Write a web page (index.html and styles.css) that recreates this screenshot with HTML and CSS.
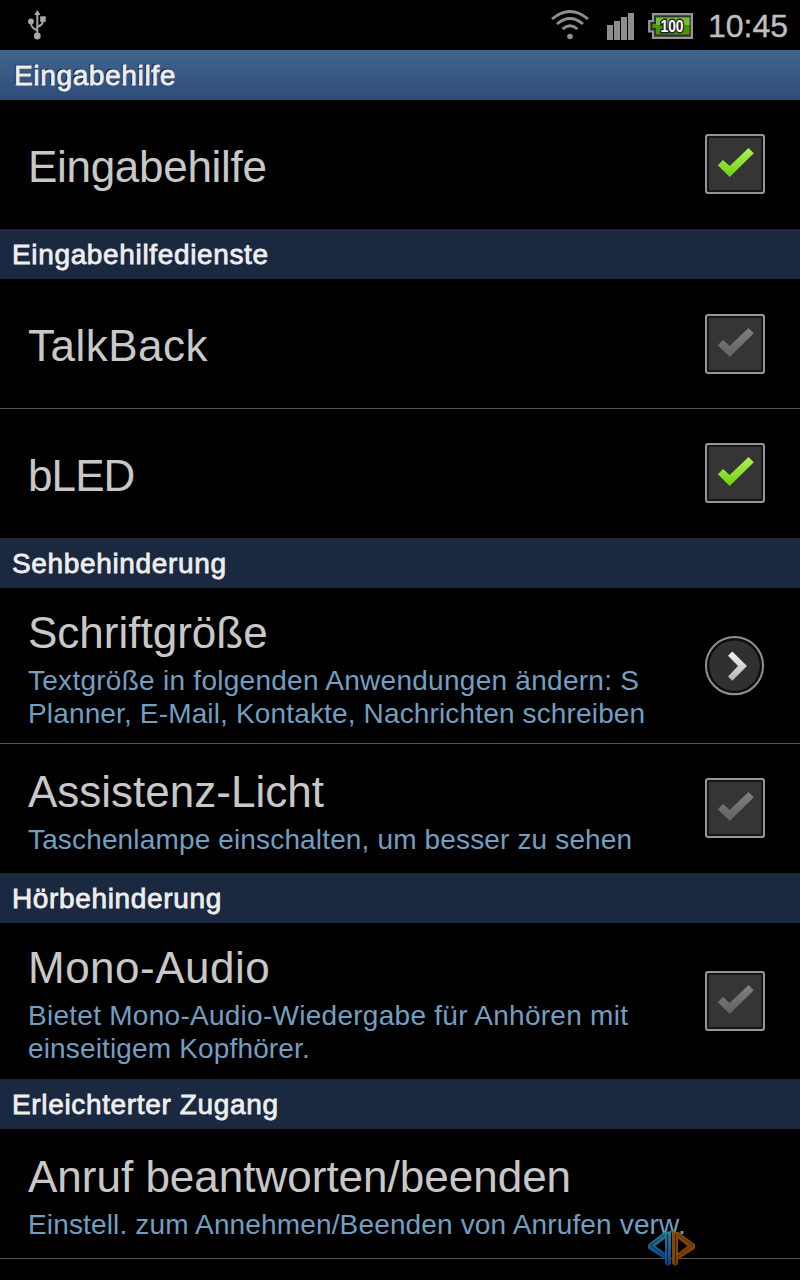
FILE: index.html
```
<!DOCTYPE html>
<html lang="de">
<head>
	<meta charset="UTF-8">
	<title>Eingabehilfe</title>
	<link rel="stylesheet" href="styles.css">
</head>
<body>

	<!-- shared shapes -->
	<svg class="defs" width="0" height="0">
		<defs>
			<linearGradient id="green" x1="0" y1="0" x2="0" y2="1">
				<stop offset="0" stop-color="#b0f05a"/>
				<stop offset="1" stop-color="#70d010"/>
			</linearGradient>
			<linearGradient id="grey" x1="0" y1="0" x2="0" y2="1">
				<stop offset="0" stop-color="#808080"/>
				<stop offset="1" stop-color="#626262"/>
			</linearGradient>
			<linearGradient id="silver" x1="0" y1="0" x2="0" y2="1">
				<stop offset="0" stop-color="#f4f4f4"/>
				<stop offset="1" stop-color="#b4b4b4"/>
			</linearGradient>
			<linearGradient id="blue" x1="0" y1="0" x2="0" y2="1">
				<stop offset="0" stop-color="#2f7d90"/>
				<stop offset="1" stop-color="#0d3f88"/>
			</linearGradient>
			<linearGradient id="orange" x1="0" y1="0" x2="0" y2="1">
				<stop offset="0" stop-color="#8a4a0c"/>
				<stop offset="1" stop-color="#7c4002"/>
			</linearGradient>
			<symbol id="check" viewBox="0 0 60 60">
				<path d="M12.800 31.200L18 25.900L24.700 32L43.500 14L48.800 19.200L24.700 43Z"/>
			</symbol>
		</defs>
	</svg>

	<div class="statusbar">
		<svg class="usb" width="20" height="30" viewBox="0 0 20 30">
			<path d="M10.300 4V25M10.300 20.500C6 18.500 4 17 4 12M10.300 17C14.500 15 16 14 16 10" fill="none" stroke="#a4a4a4" stroke-width="2"/>
			<path d="M10.300 0L13.500 5H7.200Z" fill="#a8a8a8"/>
			<circle cx="3.900" cy="11.500" r="2.900" fill="#a8a8a8"/>
			<rect x="13.200" y="6.300" width="5.500" height="5.500" fill="#a8a8a8"/>
			<circle cx="10.300" cy="26" r="3.400" fill="#a8a8a8"/>
		</svg>
		<div class="tray">
			<svg class="wifi" width="40" height="32" viewBox="0 0 40 32">
				<g fill="none" stroke="#8f8f8f" stroke-width="2.800">
					<path d="M2 11Q20 -4 38 11"/>
					<path d="M7 16Q20 5 33 16"/>
					<path d="M12.500 21Q20 14.500 27.500 21"/>
				</g>
				<circle cx="20" cy="28.500" r="2.800" fill="#8f8f8f"/>
			</svg>
			<svg class="signal" width="28" height="28" viewBox="0 0 28 28">
				<path d="M0 13h6v15H0zM7 9h6v19H7zM14 5h6v23h-6zM21 1h6v27h-6z" fill="#8e8e8e"/>
			</svg>
			<svg class="battery" width="46" height="26" viewBox="0 0 46 26">
				<path d="M5 1.200H43.900V24.800H5V18.500H1.200V8H5Z" fill="#303030" stroke="#969696" stroke-width="2.200"/>
				<path d="M8 4.500H41.500V21.500H8V15H4.500V11H8Z" fill="#479805"/>
				<path d="M8 4.500H41.500V12H8Z" fill="#73bd2e"/>
				<text x="24" y="18.500" text-anchor="middle" textLength="23" lengthAdjust="spacingAndGlyphs">100</text>
			</svg>
			<span class="clock">10:45</span>
		</div>
	</div>

	<div class="titlebar"><span>Eingabehilfe</span></div>

	<div class="list">
		<div class="row">
			<div class="label"><span class="name tight">Eingabehilfe</span></div>
			<div class="checkbox on"><svg><use href="#check"/></svg></div>
		</div>

		<div class="header"><span>Eingabehilfedienste</span></div>
		<div class="row line">
			<div class="label"><span class="name wide">TalkBack</span></div>
			<div class="checkbox"><svg><use href="#check"/></svg></div>
		</div>
		<div class="row">
			<div class="label"><span class="name caps">bLED</span></div>
			<div class="checkbox on"><svg><use href="#check"/></svg></div>
		</div>

		<div class="header"><span>Sehbehinderung</span></div>
		<div class="row tall line">
			<div class="label two">
				<span class="name">Schriftgröße</span>
				<span class="summary"><span class="loose">Textgröße in folgenden Anwendungen ändern: S</span><br>Planner, E-Mail, Kontakte, Nachrichten schreiben</span>
			</div>
			<svg class="more" width="62" height="62" viewBox="0 0 62 62">
				<circle cx="30.500" cy="30.700" r="28.500" fill="#303030" stroke="#8c8c8c" stroke-width="2.200"/>
				<circle cx="30.500" cy="30.700" r="26.300" fill="none" stroke="#0c0c0c" stroke-width="2.200"/>
				<path d="M24 20.700L28.300 16.500L43 31L28.300 45.800L24 41.500L34 31Z" fill="url(#silver)"/>
			</svg>
		</div>
		<div class="row">
			<div class="label two">
				<span class="name">Assistenz-Licht</span>
				<span class="summary">Taschenlampe einschalten, um besser zu sehen</span>
			</div>
			<div class="checkbox"><svg><use href="#check"/></svg></div>
		</div>

		<div class="header"><span>Hörbehinderung</span></div>
		<div class="row tall last">
			<div class="label two">
				<span class="name wide">Mono-Audio</span>
				<span class="summary"><span class="loose">Bietet Mono-Audio-Wiedergabe für Anhören mit</span><br>einseitigem Kopfhörer.</span>
			</div>
			<div class="checkbox"><svg><use href="#check"/></svg></div>
		</div>

		<div class="header"><span>Erleichterter Zugang</span></div>
		<div class="row line">
			<div class="label two">
				<span class="name">Anruf beantworten/beenden</span>
				<span class="summary">Einstell. zum Annehmen/Beenden von Anrufen verw.</span>
			</div>
		</div>
	</div>

	<svg class="watermark" width="50" height="38" viewBox="0 0 50 38">
		<path d="M1 14.500L18 1.500V8.500L8.500 16L18 23V29.500L1 18.500Z" fill="url(#blue)"/>
		<path d="M18 4.500L3.500 15.500L18 26.500" fill="none" stroke="#0a2c50" stroke-width="0.800"/>
		<path d="M18 2L24 1V34L20.500 36L18 34Z" fill="url(#blue)"/>
		<path d="M20.500 4V35" stroke="#0a2450"/>
		<path d="M48 14.500L31 1.500V8.500L40.500 16L31 23V29.500L48 18.500Z" fill="url(#orange)"/>
		<path d="M31 4.500L45.500 15.500L31 26.500" fill="none" stroke="#442300" stroke-width="0.800"/>
		<path d="M25 1L31 2V34L28.500 36L25 34Z" fill="url(#orange)"/>
		<path d="M28.500 4V35" stroke="#3c2002"/>
	</svg>

</body>
</html>
```
FILE: styles.css
```
body {
	margin: 0;
	width: 800px;
	height: 1280px;
	overflow: hidden;
	position: relative;
	background: #000;
	font-family: "Liberation Sans", Arial, sans-serif;
	white-space: nowrap;
}
.defs { position: absolute; }

/* status bar */
.statusbar {
	height: 50px;
	display: flex;
	justify-content: space-between;
}
.usb { margin: 10px 0 0 27px; }
.tray { display: flex; padding-right: 12px; }
.wifi { margin: 8px 17px 0 0; }
.signal { margin: 12px 13px 0 0; }
.battery { margin: 13px 14px 0 0; }
.battery text {
	font-size: 16px;
	font-weight: bold;
	fill: #fff;
	stroke: #222;
	stroke-width: 3px;
	paint-order: stroke;
}
.clock {
	font-size: 32px;
	line-height: 52px;
	color: #bebebe;
	-webkit-text-stroke: 0.4px #bebebe;
}

.titlebar {
	height: 50px;
	line-height: 51px;
	padding-left: 14px;
	box-sizing: border-box;
	background: linear-gradient(#40648f, #2e4d78);
	color: #eee;
	font-size: 28px;
	letter-spacing: 0.65px;
	-webkit-text-stroke: 0.8px #eee;
	text-shadow: -1px -1px 1px #000;
}

/* list */
.header {
	height: 50px;
	line-height: 50px;
	padding-left: 12px;
	box-sizing: border-box;
	background: #1a2940;
	border-top: 1px solid #1c2532;
	color: #eee;
	font-size: 28px;
	letter-spacing: 0.65px;
	-webkit-text-stroke: 0.8px #eee;
}
.row {
	height: 129px;
	padding: 0 35px 0 28px;
	display: flex;
	align-items: center;
	justify-content: space-between;
}
.row.tall { height: 155px; }
.row.last { height: 156px; }
.row.line { border-bottom: 1px solid #555; }
.label {
	display: flex;
	flex-direction: column;
	align-items: flex-start;
	padding-top: 4px;
}
.label.two { padding-top: 5px; }
.tall.line .label { padding-top: 6px; }
.name {
	font-size: 44px;
	line-height: 52px;
	color: #c8c8c8;
}
.name.tight { letter-spacing: -0.3px; }
.name.wide { letter-spacing: 0.5px; }
.name.caps { letter-spacing: -0.9px; }
.summary {
	margin-top: 5px;
	font-size: 28px;
	line-height: 33px;
	letter-spacing: 0.15px;
	color: #729fc0;
}
.loose { letter-spacing: 0.27px; }
.checkbox {
	width: 60px;
	height: 60px;
	margin-bottom: 1px;
	box-sizing: border-box;
	border: 2px solid #959595;
	border-radius: 3px;
	background: #353535;
	box-shadow: inset 0 0 0 2px #161616;
}
.line .checkbox { margin: 1px 0 0; }
.checkbox svg {
	display: block;
	width: 60px;
	height: 60px;
	margin: -2px;
	fill: url(#grey);
}
.checkbox.on svg { fill: url(#green); }
.more { margin-right: -1px; }

.watermark {
	position: absolute;
	left: 647px;
	top: 1230px;
}
```
